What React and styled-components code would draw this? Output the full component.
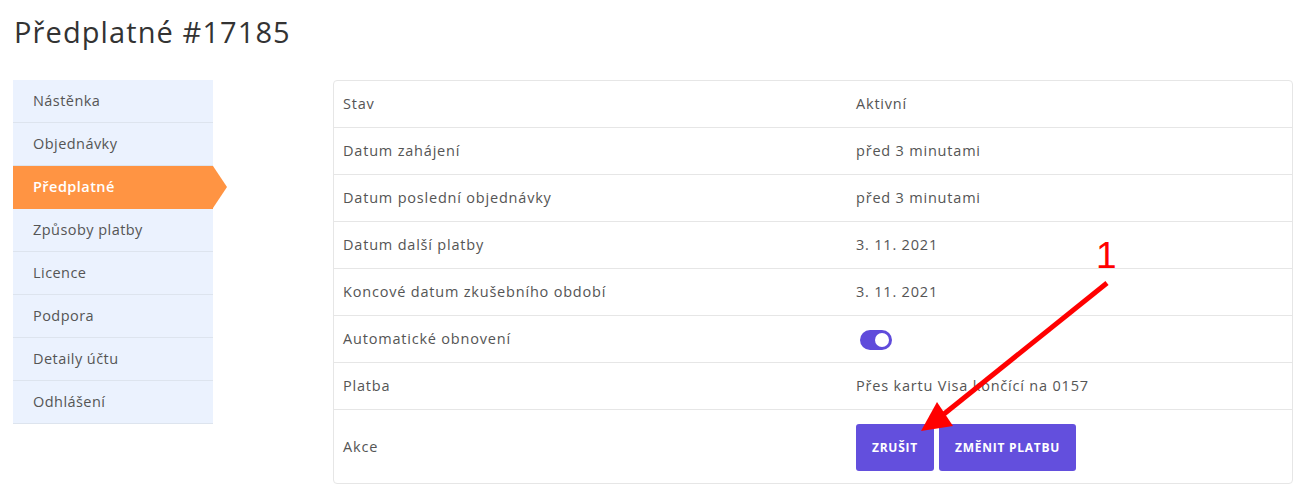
import React from "react";
import styled, { createGlobalStyle } from "styled-components";

const Global = createGlobalStyle`
  html, body { margin: 0; padding: 0; background: #fff; }
  body { font-family: "Open Sans", "DejaVu Sans", sans-serif; color: #555; }
`;

const Page = styled.div`
  position: relative;
  padding: 12px 9px 0 13px;
  width: 1302px;
  height: 498px;
  box-sizing: border-box;
  overflow: hidden;
`;

const Title = styled.h1`
  margin: 0 0 0 1px;
  font-size: 29px;
  line-height: 40px;
  font-weight: 400;
  color: #333;
  letter-spacing: 1.1px;
`;

const Layout = styled.div`
  display: grid;
  grid-template-columns: 200px 960px;
  column-gap: 120px;
  margin-top: 28px;
  align-items: start;
`;

const Nav = styled.nav`
  display: flex;
  flex-direction: column;
`;

const NavItem = styled.a`
  position: relative;
  display: flex;
  align-items: center;
  height: 43px;
  padding: 0 0 1px 20px;
  box-sizing: border-box;
  border-bottom: 1px solid ${(p) => (p.$active ? "#ff9443" : "#dde4ee")};
  background: ${(p) => (p.$active ? "#ff9443" : "#ebf2fe")};
  color: ${(p) => (p.$active ? "#fff" : "#555")};
  font-size: 14.5px;
  font-weight: ${(p) => (p.$active ? 600 : 400)};
  letter-spacing: 0.45px;
  text-decoration: none;
  &::after {
    content: "";
    display: ${(p) => (p.$active ? "block" : "none")};
    position: absolute;
    right: -14px;
    top: 0;
    border-style: solid;
    border-width: 21.5px 0 21.5px 14px;
    border-color: transparent transparent transparent #ff9443;
  }
`;

const Table = styled.div`
  border: 1px solid #e6e6e6;
  border-radius: 4px;
  display: grid;
  grid-template-columns: 513px 1fr;
`;

const Cell = styled.div`
  display: flex;
  align-items: center;
  height: ${(p) => (p.$tall ? "73px" : "47px")};
  box-sizing: border-box;
  padding: 0 9px 1px;
  border-bottom: ${(p) => (p.$last ? "none" : "1px solid #e6e6e6")};
  font-size: 14.5px;
  letter-spacing: 0.8px;
  color: #555;
`;

const Toggle = styled.span`
  position: relative;
  display: inline-block;
  width: 32px;
  height: 20px;
  margin-left: 4px;
  margin-top: 3px;
  border-radius: 10px;
  background: #5f4bdb;
  &::after {
    content: "";
    position: absolute;
    right: 3px;
    top: 3px;
    width: 14px;
    height: 14px;
    border-radius: 50%;
    background: #fff;
  }
`;

const Buttons = styled.div`
  display: flex;
  gap: 5px;
  margin-top: 2px;
`;

const Button = styled.button`
  height: 47px;
  padding: 0 16px;
  border: none;
  border-radius: 3px;
  background: #634fdd;
  color: #fff;
  font-family: "Open Sans", "DejaVu Sans", sans-serif;
  font-size: 12px;
  font-weight: 700;
  letter-spacing: 0.75px;
  text-transform: uppercase;
  cursor: pointer;
`;

const Overlay = styled.svg`
  position: absolute;
  left: 0;
  top: 0;
  width: 1302px;
  height: 498px;
  pointer-events: none;
`;

const navItems = [
  "Nástěnka",
  "Objednávky",
  "Předplatné",
  "Způsoby platby",
  "Licence",
  "Podpora",
  "Detaily účtu",
  "Odhlášení",
];

const rows = [
  ["Stav", "Aktivní"],
  ["Datum zahájení", "před 3 minutami"],
  ["Datum poslední objednávky", "před 3 minutami"],
  ["Datum další platby", "3. 11. 2021"],
  ["Koncové datum zkušebního období", "3. 11. 2021"],
  ["Automatické obnovení", <Toggle key="t" />],
  ["Platba", "Přes kartu Visa končící na 0157"],
];

export default function App() {
  return (
    <>
      <Global />
      <Page>
        <Title>Předplatné #17185</Title>
        <Layout>
          <Nav>
            {navItems.map((n) => (
              <NavItem key={n} href="#" $active={n === "Předplatné"}>
                {n}
              </NavItem>
            ))}
          </Nav>
          <Table>
            {rows.map(([k, v]) => (
              <React.Fragment key={k}>
                <Cell>{k}</Cell>
                <Cell>{v}</Cell>
              </React.Fragment>
            ))}
            <Cell $tall $last>Akce</Cell>
            <Cell $tall $last>
              <Buttons>
                <Button>Zrušit</Button>
                <Button>Změnit platbu</Button>
              </Buttons>
            </Cell>
          </Table>
        </Layout>
        <Overlay viewBox="0 0 1302 498">
          <text x="1096" y="268" fontSize="37" fill="#ff0000" fontFamily="Liberation Sans, Arial, sans-serif">1</text>
          <line x1="1107" y1="283" x2="944" y2="414" stroke="#ff0000" strokeWidth="5" />
          <polygon points="921,431 937,402 953,426" fill="#ff0000" />
        </Overlay>
      </Page>
    </>
  );
}
